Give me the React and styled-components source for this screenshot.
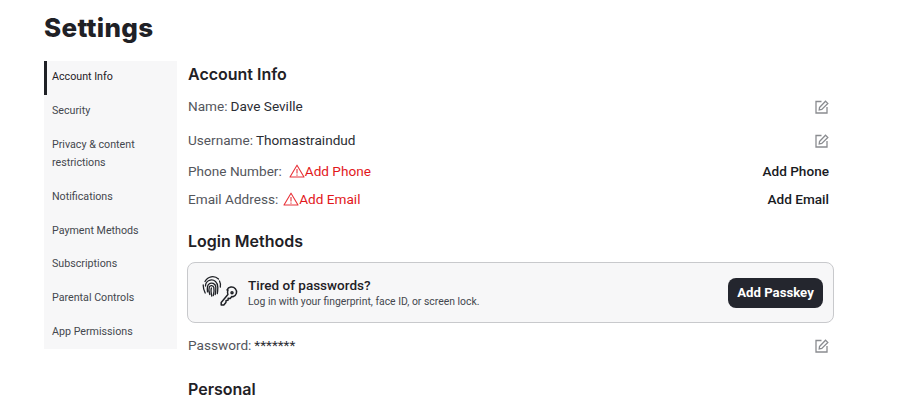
import React from "react";
import styled, { createGlobalStyle } from "styled-components";

const Global = createGlobalStyle`
  html, body { margin: 0; padding: 0; background: #fff; overflow: hidden; }
  body { font-family: "Roboto", "Liberation Sans", sans-serif; color: #393b3d; }
`;

const Page = styled.div`
  width: 901px;
  height: 407px;
  overflow: hidden;
  padding: 11px 0 0 44px;
  box-sizing: border-box;
`;

const Title = styled.h1`
  margin: 0 0 16px;
  font: 800 26px/34px "Inter", sans-serif;
  color: #1f2126;
  letter-spacing: 0.3px;
`;

const Columns = styled.div`
  display: flex;
  align-items: flex-start;
`;

const Side = styled.nav`
  width: 133px;
  height: 288px;
  background: #f7f7f8;
  display: flex;
  flex-direction: column;
  flex: none;
`;

const SideItem = styled.div`
  box-sizing: border-box;
  padding: 7px 8px 8.9px ${(p) => (p.$active ? "5px" : "8px")};
  font: 400 10.7px/18px "Roboto", sans-serif;
  color: ${(p) => (p.$active ? "#1f2126" : "#44474e")};
  border-left: ${(p) => (p.$active ? "3px solid #1f2126" : "none")};
`;

const Main = styled.main`
  width: 645px;
  margin-left: 11px;
  padding-top: 2px;
  flex: none;
`;

const Heading = styled.h2`
  margin: ${(p) => p.$top || 0}px 0 0;
  font: 600 16px/22px "Inter", sans-serif;
  color: #1f2126;
`;

const Row = styled.div`
  display: flex;
  align-items: center;
  justify-content: space-between;
  height: ${(p) => p.$h}px;
  padding-right: 4px;
  font: 400 13.6px/20px "Roboto", sans-serif;
`;

const Field = styled.div`
  display: flex;
  align-items: center;
  color: #54565c;
`;

const Value = styled.span`
  color: #2b2d33;
  margin-left: 3px;
`;

const Alert = styled.span`
  display: inline-flex;
  align-items: center;
  color: #e2171b;
  margin-left: ${(p) => p.$gap}px;
  svg { display: block; }
`;

const Action = styled.span`
  color: #191b1f;
  font-weight: 500;
`;

const EditBtn = styled.span`
  display: flex;
  color: #8a8c90;
  transform: translateY(1px);
`;

const PasskeyCard = styled.div`
  box-sizing: border-box;
  height: 61px;
  width: 647px;
  margin: 10px 0 0 -1px;
  border: 1px solid #c8c9cc;
  border-radius: 8px;
  background: #f7f7f8;
  display: flex;
  align-items: center;
  padding: 0 10px 0 14px;
`;

const CardText = styled.div`
  margin-left: 10px;
  flex: 1;
`;

const CardTitle = styled.div`
  font: 500 13.5px/18px "Roboto", sans-serif;
  color: #1f2126;
`;

const CardSub = styled.div`
  font: 400 10.4px/15px "Roboto", sans-serif;
  color: #44474e;
`;

const PasskeyButton = styled.button`
  border: 0;
  height: 30px;
  width: 95px;
  border-radius: 8px;
  background: #24262e;
  color: #fff;
  font: 700 13.2px/30px "Roboto", sans-serif;
  padding: 0;
`;

const EditIcon = () => (
  <svg width="14" height="14" viewBox="0 0 14 14" fill="none" stroke="currentColor" strokeWidth="1.3">
    <path d="M6.500 1.500H1v11.500h11V7" />
    <path d="M4.500 7.500 10.500 1.200l2.300 2.200-6 6.100-2.600.4z" />
  </svg>
);

const WarnIcon = () => (
  <svg width="16" height="14" viewBox="0 0 16 14" fill="none" stroke="#e8333a" strokeWidth="1.1">
    <path d="M8 1.200 1 13h14z" strokeLinejoin="round" />
    <path d="M8 5v4.400M8 10.400v1.300" />
  </svg>
);

const PasskeyIcon = () => (
  <svg width="36" height="32" viewBox="0 0 36 32" fill="none" stroke="#1f2126" style={{ overflow: "visible" }}>
    <g strokeWidth="1.3" strokeLinecap="round" transform="translate(0 -2)">
      <path d="M3 6.500a8.500 8.500 0 0 1 13.500-2.500" />
      <path d="M17.500 6a9 9 0 0 1 .8 6" />
      <path d="M1.200 10c0 3 .7 5.500 2 8" />
      <path d="M3.500 11a6 6 0 0 1 10-4.500c1.700 1.500 2.300 3.500 2.300 6 0 2-.1 4-.5 6" />
      <path d="M5.500 16.800C5 13 5 10.500 7 9c2.500-2 6.500-.5 6.800 3 .1 2 .1 5-.6 7.500" />
      <path d="M7.800 19.500c-1-2.500-1.200-5.500-.5-7.600 1-2 4-1.600 4.500.5.400 1.800.2 5.700-.5 8.300" />
      <path d="M9.800 21c-.6-2.500-1.100-6-.4-8" />
    </g>
    <g strokeWidth="1.500" strokeLinejoin="round" transform="translate(-0.500 1.500)">
      <path d="M25.500 11.500a5 5 0 1 1 6 6.800l-1.200-.2-1.600 1.800-2-.1-.2 2-1.900.3-.2 1.900-2.100 2.500h-2.600v-2.600l6.700-7.900c-.7-1.400-.6-3 .1-4.500z" />
      <circle cx="30.500" cy="14.200" r="1" />
    </g>
  </svg>
);

const items = [
  "Security",
  "Privacy & content restrictions",
  "Notifications",
  "Payment Methods",
  "Subscriptions",
  "Parental Controls",
  "App Permissions",
];

export default function App() {
  return (
    <Page>
      <Global />
      <Title>Settings</Title>
      <Columns>
        <Side>
          <SideItem $active>Account Info</SideItem>
          {items.map((t) => (
            <SideItem key={t}>{t}</SideItem>
          ))}
        </Side>
        <Main>
          <Heading>Account Info</Heading>
          <Row $h={42}>
            <Field>Name:<Value>Dave Seville</Value></Field>
            <EditBtn><EditIcon /></EditBtn>
          </Row>
          <Row $h={26}>
            <Field>Username:<Value>Thomastraindud</Value></Field>
            <EditBtn><EditIcon /></EditBtn>
          </Row>
          <Row $h={36}>
            <Field>Phone Number:<Alert $gap={7}><WarnIcon />Add Phone</Alert></Field>
            <Action>Add Phone</Action>
          </Row>
          <Row $h={20}>
            <Field>Email Address:<Alert $gap={5}><WarnIcon />Add Email</Alert></Field>
            <Action>Add Email</Action>
          </Row>
          <Heading $top={21}>Login Methods</Heading>
          <PasskeyCard>
            <PasskeyIcon />
            <CardText>
              <CardTitle>Tired of passwords?</CardTitle>
              <CardSub>Log in with your fingerprint, face ID, or screen lock.</CardSub>
            </CardText>
            <PasskeyButton>Add Passkey</PasskeyButton>
          </PasskeyCard>
          <Row $h={44}>
            <Field>Password:<Value>*******</Value></Field>
            <EditBtn><EditIcon /></EditBtn>
          </Row>
          <Heading $top={11}>Personal</Heading>
        </Main>
      </Columns>
    </Page>
  );
}
